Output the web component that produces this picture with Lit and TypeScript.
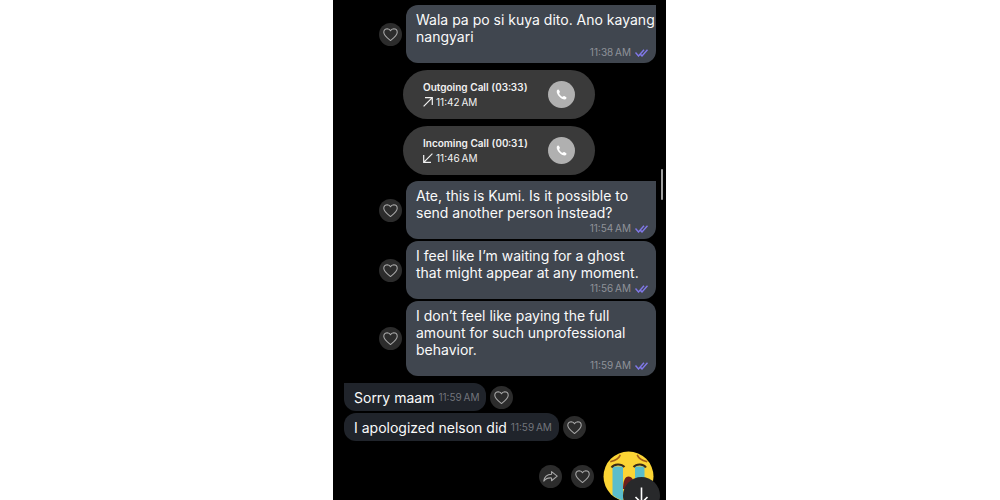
import { LitElement, html, css, svg } from "lit";
import { customElement, property } from "lit/decorators.js";

const heart = svg`<path d="M12 20.500C7.500 17 2.500 13.400 2.500 8.900 2.500 6 4.800 3.800 7.500 3.800 9.500 4 11.200 5 12 6.700 12.800 5 14.500 4 16.500 3.800 19.200 3.800 21.500 6 21.500 8.900 21.500 13.400 16.500 17 12 20.500Z"/>`;
const share = svg`<path d="M13.500 5 21.500 11.500 13.500 18V14C8.500 13.600 5 15 2.500 18.500 3.200 12.500 7.500 9 13.500 8.800Z"/>`;

@customElement("round-button")
export class RoundButton extends LitElement {
  @property() icon = "heart";

  static styles = css`
    :host { display: block; flex: none; }
    .round {
      display: grid;
      place-items: center;
      width: 23px;
      height: 23px;
      padding: 0;
      border: 0;
      border-radius: 50%;
      background: #2c2c2c;
      cursor: pointer;
    }
    .icon {
      width: 17px;
      height: 17px;
      fill: none;
      stroke: #a8a8a8;
      stroke-width: 1.5;
      stroke-linejoin: round;
    }
  `;

  render() {
    const isShare = this.icon === "share";
    return html`<button class="round" aria-label=${isShare ? "Forward" : "Like"}>
      <svg class="icon" viewBox="0 0 24 24">${isShare ? share : heart}</svg>
    </button>`;
  }
}

@customElement("sent-message")
export class SentMessage extends LitElement {
  @property() text = "";
  @property() time = "";
  @property({ type: Boolean }) first = false;

  static styles = css`
    :host { display: flex; align-items: center; justify-content: flex-end; gap: 4px; }
    .bubble {
      box-sizing: border-box;
      width: 250px;
      padding: 6px 0 3px 10px;
      border-radius: 12px;
      background: #40464f;
      color: #fafafa;
    }
    .first { border-top-right-radius: 0; }
    .text { margin: 0; font-size: 14px; line-height: 17px; white-space: pre-line; }
    .meta {
      display: flex;
      align-items: center;
      justify-content: flex-end;
      gap: 4px;
      height: 15px;
      padding-right: 8px;
      color: #8f9299;
      font-size: 10px;
      line-height: 15px;
    }
    .ticks { width: 13px; height: 8px; fill: none; stroke: #8078e8; stroke-width: 1.4; }
  `;

  render() {
    return html`
      <round-button></round-button>
      <div class="bubble ${this.first ? "first" : ""}">
        <p class="text">${this.text}</p>
        <div class="meta">
          <time>${this.time}</time>
          <svg class="ticks" viewBox="0 0 13 8"><path d="M.5 3.500 3.500 7 9 .8M5.500 5.200 7 7 12.500 .8"/></svg>
        </div>
      </div>`;
  }
}

@customElement("call-entry")
export class CallEntry extends LitElement {
  @property() label = "";
  @property() time = "";
  @property({ type: Boolean }) outgoing = false;

  static styles = css`
    :host { display: block; }
    .call {
      box-sizing: border-box;
      display: flex;
      align-items: center;
      justify-content: space-between;
      width: 192px;
      height: 49px;
      padding: 0 20px;
      border-radius: 25px;
      background: #3a3a3a;
      color: #f2f2f2;
    }
    .title { font-size: 10px; font-weight: 600; line-height: 15px; font-variant-numeric: tabular-nums; }
    .when { display: flex; align-items: center; gap: 3px; font-size: 10px; line-height: 15px; }
    .arrow { width: 10px; height: 10px; fill: none; stroke: #f2f2f2; stroke-width: 1.2; }
    .dial {
      display: grid;
      place-items: center;
      width: 27px;
      height: 27px;
      padding: 0;
      border: 0;
      border-radius: 50%;
      background: #b0b0b0;
      cursor: pointer;
    }
    .phone { width: 11px; height: 11px; fill: #fff; }
  `;

  render() {
    const arrow = this.outgoing
      ? svg`<path d="M.6 9.400 9.300 .7M2 .7H9.300V8"/>`
      : svg`<path d="M9.400 .6 .7 9.300M.7 2V9.300H8"/>`;
    return html`<div class="call">
      <div>
        <div class="title">${this.label}</div>
        <div class="when"><svg class="arrow" viewBox="0 0 10 10">${arrow}</svg><time>${this.time}</time></div>
      </div>
      <button class="dial" aria-label="Call back">
        <svg class="phone" viewBox="0 0 12 12"><path d="M.8 2.200C.9 1.200 1.800 .5 2.500 .5 3 .5 4.200 2.500 4.300 3.100 4.400 3.700 3.400 4.200 3.500 4.800 3.700 5.900 6 8.200 7.100 8.500 7.800 8.600 8.300 7.600 8.900 7.700 9.500 7.800 11.500 9 11.500 9.500 11.400 10.400 10.700 11.300 9.700 11.400 5.700 11.500 .4 6.200 .8 2.200Z"/></svg>
      </button>
    </div>`;
  }
}

@customElement("received-message")
export class ReceivedMessage extends LitElement {
  @property() text = "";
  @property() time = "";
  @property({ type: Boolean }) first = false;

  static styles = css`
    :host { display: flex; align-items: center; gap: 4px; }
    .bubble {
      display: flex;
      align-items: center;
      gap: 4px;
      height: 28px;
      padding: 0 7px 0 10px;
      border-radius: 12px;
      background: #20242b;
      color: #fafafa;
      font-size: 14px;
    }
    .first { border-top-left-radius: 0; }
    .time { color: #72757b; font-size: 10px; }
  `;

  render() {
    return html`
      <div class="bubble ${this.first ? "first" : ""}">
        <span>${this.text}</span><time class="time">${this.time}</time>
      </div>
      <round-button></round-button>`;
  }
}

@customElement("app-root")
export class AppRoot extends LitElement {
  static styles = css`
    :host {
      display: flex;
      justify-content: center;
      box-sizing: border-box;
      height: 100vh;
      padding-right: 1px;
      overflow: hidden;
      background: #fff;
      font-family: Inter, "Liberation Sans", sans-serif;
    }
    .chat {
      position: relative;
      box-sizing: border-box;
      width: 333px;
      padding: 5px 10px 0 11px;
      background: #000;
      overflow: hidden;
    }
    .group { display: flex; flex-direction: column; gap: 2px; }
    .calls { display: flex; flex-direction: column; gap: 7px; padding: 7px 61px 6px 0; align-items: flex-end; }
    .received { padding: 7px 0 10px; }
    .sticker-row { display: flex; align-items: center; justify-content: flex-end; gap: 9px; padding-right: 2px; }
    .sticker { width: 51px; height: 51px; flex: none; }
    .thumb {
      position: absolute;
      top: 169px;
      right: 3px;
      width: 2px;
      height: 31px;
      border-radius: 1px;
      background: #a0a0a0;
    }
    .latest {
      position: absolute;
      right: 6px;
      bottom: -14px;
      width: 37px;
      height: 37px;
      padding: 0;
      border: 0;
      border-radius: 50%;
      background: #28292b;
      cursor: pointer;
    }
    .down { display: block; width: 37px; height: 37px; fill: none; stroke: #fff; stroke-width: 1.6; }
  `;

  render() {
    return html`<main class="chat">
      <sent-message first text="Wala pa po si kuya dito. Ano kayang
nangyari" time="11:38&#8239;AM"></sent-message>
      <section class="calls">
        <call-entry outgoing label="Outgoing Call (03:33)" time="11:42&#8239;AM"></call-entry>
        <call-entry label="Incoming Call (00:31)" time="11:46&#8239;AM"></call-entry>
      </section>
      <section class="group">
        <sent-message first text="Ate, this is Kumi. Is it possible to
send another person instead?" time="11:54&#8239;AM"></sent-message>
        <sent-message text="I feel like I’m waiting for a ghost
that might appear at any moment." time="11:56&#8239;AM"></sent-message>
        <sent-message text="I don’t feel like paying the full
amount for such unprofessional
behavior." time="11:59&#8239;AM"></sent-message>
      </section>
      <section class="group received">
        <received-message first text="Sorry maam" time="11:59&#8239;AM"></received-message>
        <received-message text="I apologized nelson did" time="11:59&#8239;AM"></received-message>
      </section>
      <div class="sticker-row">
        <round-button icon="share"></round-button>
        <round-button></round-button>
        <svg class="sticker" viewBox="0 0 51 51" role="img" aria-label="Loudly crying face">
          <circle cx="25.500" cy="25.500" r="25" fill="#fcd535"/>
          <path d="M9.500 15.500H20V49.500Q14 48 9.500 44ZM32 15.500H41.500V44Q37 48 32 49.500Z" fill="#5bbdcb"/>
          <path d="M20 38C20 30 22 25.500 25.500 25.500S32 30 32 38Z" fill="#6b1f1c"/>
          <path d="M8.500 16.500C11 12.500 18.500 12.500 21.500 16M30.500 16C33.500 12.500 40.500 12.500 43 16.500" fill="none" stroke="#3a2a18" stroke-width="2"/>
          <path d="M8 10.500C12 9.500 15.500 8 17 4.500M34.500 4.500C36 8 39.500 9.500 43.500 10.500" fill="none" stroke="#a35f18" stroke-width="1.800" stroke-linecap="round"/>
        </svg>
      </div>
      <div class="thumb"></div>
      <button class="latest" aria-label="Scroll to latest">
        <svg class="down" viewBox="0 0 37 37"><path d="M18.500 10.500V26M12.500 20 18.500 26 24.500 20"/></svg>
      </button>
    </main>`;
  }
}
